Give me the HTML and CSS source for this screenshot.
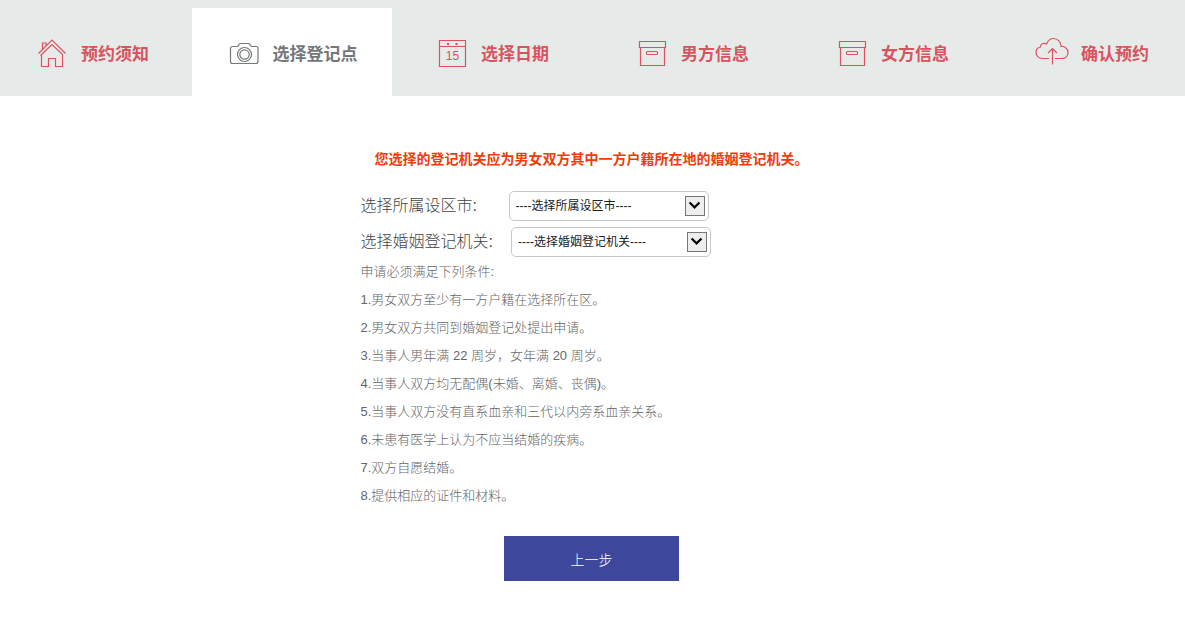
FILE: index.html
```
<!DOCTYPE html>
<html lang="zh-CN">
<head>
	<meta charset="utf-8" />
	<title>选择登记点</title>
	<link rel="stylesheet" href="styles.css">
</head>

<body>

<nav class="steps">
	<a class="step" href="#notice">
		<svg class="icon" viewBox="0 0 34 34"><path d="M3.500 18.500L17 5l13.500 13.500M7.500 14V8h3.500v2.500M6.500 19.500V31.500H13.500V23.500H20.500V31.500H27.500V19.500L17 9.500L5.500 20.500"/></svg>
		<span>预约须知</span>
	</a>
	<a class="step active" href="#place">
		<svg class="icon" viewBox="0 0 34 34"><path d="M5.500 11.500h4.500q1 0 1.500-1l.5-1q.5-1 1.500-1h8q1 0 1.500 1l.5 1q.5 1 1.500 1h4q2 0 2 2v13q0 2-2 2h-23.500q-2 0-2-2v-13q0-2 2-2z"/><circle cx="17.500" cy="19.500" r="7"/><circle cx="17.500" cy="19.500" r="4.700"/></svg>
		<span>选择登记点</span>
	</a>
	<a class="step" href="#date">
		<svg class="icon" viewBox="0 0 34 34"><path d="M4.500 5.500h26v26h-26zM4.500 11.500h26"/><path class="solid" d="M12 8h2v2h-2zM20.500 8h2v2h-2z"/><text x="17.500" y="25" text-anchor="middle">15</text></svg>
		<span>选择日期</span>
	</a>
	<a class="step" href="#man">
		<svg class="icon" viewBox="0 0 34 34"><path d="M4.500 6.500h26v6h-26zM5.500 12.500v18h24v-18"/><rect x="11.500" y="16.500" width="11" height="3" rx="1"/></svg>
		<span>男方信息</span>
	</a>
	<a class="step" href="#woman">
		<svg class="icon" viewBox="0 0 34 34"><path d="M4.500 6.500h26v6h-26zM5.500 12.500v18h24v-18"/><rect x="11.500" y="16.500" width="11" height="3" rx="1"/></svg>
		<span>女方信息</span>
	</a>
	<a class="step" href="#confirm">
		<svg class="icon" viewBox="0 0 34 34"><path d="M14 23.500H7.500C3.500 23.500 1 20.500 1 17.500C1 14.500 3 12.500 5.500 12C5.500 9 8.500 7.500 11.500 9C13 5.500 15.500 3.500 18.500 3.500C23 3.500 26 7 26 11.500C30 11 33 14 33 17.500C33 21 30.500 23.500 27 23.500H20M17.500 29.500V13.500M13 18l4.500-4.500l4.500 4.500"/></svg>
		<span>确认预约</span>
	</a>
</nav>

<form class="content">
	<p class="warning">您选择的登记机关应为男女双方其中一方户籍所在地的婚姻登记机关。</p>

	<div class="fields">
		<div class="row">
			<label for="city">选择所属设区市:</label>
			<div class="dropdown">
				<select id="city"><option>----选择所属设区市----</option></select>
				<svg class="arrow" viewBox="0 0 20 20"><path d="M4 6l5.500 5.500l5.500-5.500"/></svg>
			</div>
		</div>
		<div class="row">
			<label for="office">选择婚姻登记机关:</label>
			<div class="dropdown">
				<select id="office"><option>----选择婚姻登记机关----</option></select>
				<svg class="arrow" viewBox="0 0 20 20"><path d="M4 6l5.500 5.500l5.500-5.500"/></svg>
			</div>
		</div>
	</div>

	<div class="rules">
		<p>申请必须满足下列条件:</p>
		<p>1.男女双方至少有一方户籍在选择所在区。</p>
		<p>2.男女双方共同到婚姻登记处提出申请。</p>
		<p>3.当事人男年满 22 周岁，女年满 20 周岁。</p>
		<p>4.当事人双方均无配偶(未婚、离婚、丧偶)。</p>
		<p>5.当事人双方没有直系血亲和三代以内旁系血亲关系。</p>
		<p>6.未患有医学上认为不应当结婚的疾病。</p>
		<p>7.双方自愿结婚。</p>
		<p>8.提供相应的证件和材料。</p>
	</div>

	<button type="button" class="prev">上一步</button>
</form>

</body>

</html>
```
FILE: styles.css
```
body {
	margin: 0;
	background: #fff;
	color: #444;
	font-family: "Liberation Sans", "Noto Sans CJK SC", sans-serif;
}
p {
	margin: 0;
}

/* step bar */
.steps {
	display: flex;
	justify-content: center;
	overflow: hidden;
	padding: 8px 1px 0 0;
	background: #e6ebe9;
}
.step {
	flex: 0 0 200px;
	display: flex;
	align-items: center;
	justify-content: center;
	gap: 12px;
	height: 88px;
	color: #d9535f;
	font-size: 17px;
	font-weight: bold;
	text-decoration: none;
}
.step.active {
	background: #fff;
	color: #74777b;
}
.icon {
	width: 34px;
	height: 34px;
	fill: none;
	stroke: currentColor;
	stroke-width: 1.2;
}
.icon text {
	font-size: 12px;
	font-weight: normal;
	fill: currentColor;
	stroke: none;
}
.icon .solid {
	fill: currentColor;
	stroke: none;
}

/* form */
.content {
	max-width: 462px;
	margin: 0 auto;
	padding: 49px 2px 60px 0;
}
.warning {
	margin-bottom: 18px;
	color: #f03c0a;
	font-size: 14px;
	font-weight: bold;
	line-height: 28px;
	text-align: center;
}
.fields {
	display: grid;
	gap: 6px;
	margin-bottom: 1px;
}
.row {
	display: flex;
	align-items: center;
	gap: 18px;
}
.row label {
	min-width: 130px;
	font-size: 16px;
	font-weight: 300;
	line-height: 28px;
}
.dropdown {
	position: relative;
	width: 200px;
}
.dropdown select {
	display: block;
	width: 100%;
	height: 30px;
	padding: 0 26px 0 6px;
	border: 1px solid #c8c8c8;
	border-radius: 5px;
	background: #fff;
	color: #222;
	font-family: inherit;
	font-size: 12px;
	appearance: none;
}
.arrow {
	position: absolute;
	top: 5px;
	right: 4px;
	box-sizing: border-box;
	width: 20px;
	height: 20px;
	border: 1px solid #777;
	background: #eee;
	fill: none;
	stroke: #000;
	stroke-width: 2.4;
	pointer-events: none;
}
.rules {
	color: #666;
	font-size: 13px;
	font-weight: 300;
	line-height: 28px;
}
.prev {
	display: block;
	width: 175px;
	height: 45px;
	margin: 26px auto 0;
	border: 0;
	background: #3d479b;
	color: #fff;
	font-family: inherit;
	font-size: 14px;
	font-weight: 300;
}
```
